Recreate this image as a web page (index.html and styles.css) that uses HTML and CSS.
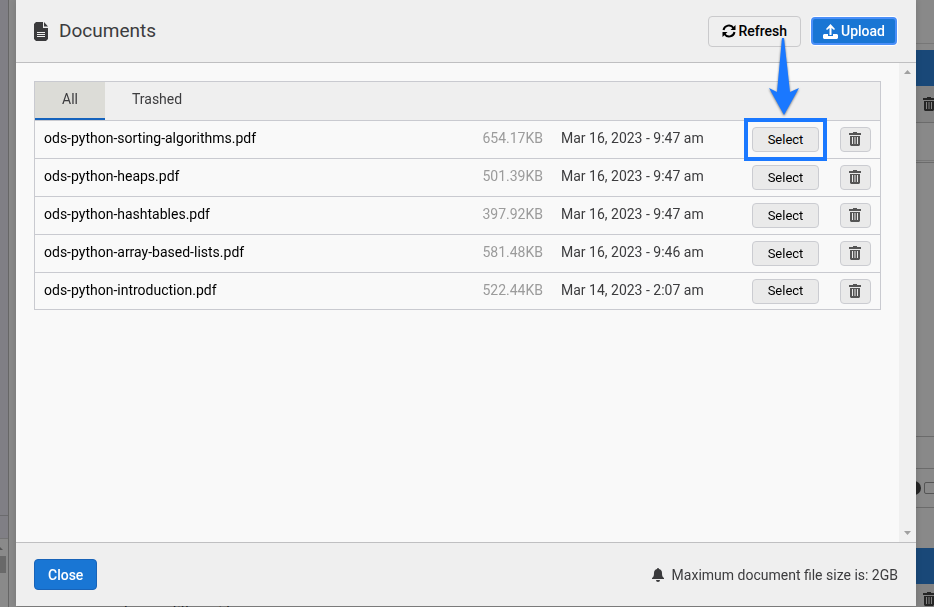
FILE: index.html
```html
<!DOCTYPE html>
<html lang="en">
<head>
<meta charset="utf-8">
<meta name="viewport" content="width=device-width, initial-scale=1">
<title>Documents</title>
<link rel="stylesheet" href="styles.css">
</head>
<body>
<svg class="sprite" aria-hidden="true">
  <symbol id="trash" viewBox="0 0 12 14">
    <path d="M4 0h4v1h4v2H0V1h4z"/>
    <path fill-rule="evenodd" d="M1 4h10v9l-1 1H2l-1-1zM3 5v7h1V5zM5.500 5v7h1V5zM8 5v7h1V5z"/>
  </symbol>
</svg>

<div class="page" aria-hidden="true">
  <div class="rail">
    <div class="rail-list"></div>
    <div class="rail-item"></div>
    <div class="rail-scroll"><svg class="rail-arrow" viewBox="0 0 6 3"><path d="M0 0l3 3H0z"/></svg><div class="rail-thumb"></div></div>
  </div>
  <div class="board">
    <div class="board-top"></div>
    <div class="band"></div>
    <div class="tools"><svg class="page-icon"><use href="#trash"/></svg></div>
    <div class="meta"></div>
    <div class="canvas"></div>
    <div class="spacer"></div>
    <div class="options"><span class="dot"></span><span class="box"></span></div>
    <div class="gap"></div>
    <div class="band"></div>
    <div class="last"><span class="lesson">Lesson title: guide</span><svg class="page-icon"><use href="#trash"/></svg></div>
  </div>
</div>

<main class="modal" role="dialog" aria-labelledby="title">
  <header class="modal-header">
    <svg class="doc-icon" viewBox="0 0 14 19"><path d="M2 0h7v6h5v11l-2 2H2l-2-2V2z"/><path d="M10 0l4 4.500h-4z"/><path class="lines" d="M3 10.500h8M3 12.500h8M3 14.500h8"/></svg>
    <h1 id="title" class="title">Documents</h1>
    <button class="btn refresh" type="button">
      <svg class="refresh-icon" viewBox="0 0 14 14"><path d="M1.500 6A5.500 5.500 0 0 1 11.500 4M12.500 8A5.500 5.500 0 0 1 2.500 10"/><path class="solid" d="M13.500 1v5h-5zM.5 13V8h5z"/></svg>
      Refresh
    </button>
    <button class="btn primary upload" type="button">
      <svg class="upload-icon" viewBox="0 0 15 15"><path d="M7.500 0L12 5l-1 1-2.500-2V11h-2V4L4 6 3 5z"/><path d="M1 10h4v2h5v-2h4l1 1v3l-1 1H1l-1-1v-3z"/></svg>
      Upload
    </button>
  </header>

  <section class="modal-body">
    <div class="content">
      <div class="panel">
        <nav class="tabs">
          <button class="tab active" type="button">All</button>
          <button class="tab" type="button">Trashed</button>
        </nav>
        <table class="files">
          <tbody>
            <tr>
              <td class="name">ods-python-sorting-algorithms.pdf</td><td class="size">654.17KB</td><td class="date">Mar 16, 2023 - 9:47 am</td>
              <td class="pick"><div class="target"><button class="row-btn select" type="button">Select</button>
                <span class="frame"></span>
                <svg class="pointer" viewBox="0 0 30 78"><path d="M13 0h2l6 54 9-4-15 27L0 50l8 4z"/></svg></div></td>
              <td class="remove"><button class="row-btn bin" type="button" aria-label="Delete"><svg class="bin-icon"><use href="#trash"/></svg></button></td>
            </tr>
            <tr>
              <td class="name">ods-python-heaps.pdf</td><td class="size">501.39KB</td><td class="date">Mar 16, 2023 - 9:47 am</td>
              <td class="pick"><button class="row-btn select" type="button">Select</button></td>
              <td class="remove"><button class="row-btn bin" type="button" aria-label="Delete"><svg class="bin-icon"><use href="#trash"/></svg></button></td>
            </tr>
            <tr>
              <td class="name">ods-python-hashtables.pdf</td><td class="size">397.92KB</td><td class="date">Mar 16, 2023 - 9:47 am</td>
              <td class="pick"><button class="row-btn select" type="button">Select</button></td>
              <td class="remove"><button class="row-btn bin" type="button" aria-label="Delete"><svg class="bin-icon"><use href="#trash"/></svg></button></td>
            </tr>
            <tr>
              <td class="name">ods-python-array-based-lists.pdf</td><td class="size">581.48KB</td><td class="date">Mar 16, 2023 - 9:46 am</td>
              <td class="pick"><button class="row-btn select" type="button">Select</button></td>
              <td class="remove"><button class="row-btn bin" type="button" aria-label="Delete"><svg class="bin-icon"><use href="#trash"/></svg></button></td>
            </tr>
            <tr>
              <td class="name">ods-python-introduction.pdf</td><td class="size">522.44KB</td><td class="date">Mar 14, 2023 - 2:07 am</td>
              <td class="pick"><button class="row-btn select" type="button">Select</button></td>
              <td class="remove"><button class="row-btn bin" type="button" aria-label="Delete"><svg class="bin-icon"><use href="#trash"/></svg></button></td>
            </tr>
          </tbody>
        </table>
      </div>
    </div>
    <div class="scrollbar" aria-hidden="true">
      <svg class="scroll-arrow" viewBox="0 0 7 4"><path d="M0 4l3.500-4L7 4z"/></svg>
      <svg class="scroll-arrow" viewBox="0 0 7 4"><path d="M0 0l3.500 4L7 0z"/></svg>
    </div>
  </section>

  <footer class="modal-footer">
    <button class="btn primary close" type="button">Close</button>
    <p class="notice">
      <svg class="bell-icon" viewBox="0 0 12 14"><path d="M5 1a1 1 0 0 1 2 0c2 .5 3 2 3 4 0 3 .5 4 2 5v1H0v-1c1.500-1 2-2 2-5 0-2 1-3.500 3-4zM4 12h4a2 2 0 0 1-4 0z"/></svg>
      Maximum document file size is: 2GB
    </p>
  </footer>
</main>
</body>
</html>
```
FILE: styles.css
```css
* { box-sizing: border-box; }

body {
  margin: 0;
  height: 100vh;
  overflow: hidden;
  font: 14px/20px Roboto, "Liberation Sans", sans-serif;
  color: #3c3c3e;
  background: #898989;
}

button { font: inherit; color: inherit; margin: 0; cursor: pointer; }
.sprite { position: absolute; width: 0; height: 0; }

/* Page under the dialog */
.page { display: grid; grid-template-columns: 9px 1fr; column-gap: 8px; height: 100%; }
.rail { display: flex; flex-direction: column; border-right: 1px solid #666; background: #807f85; }
.rail-list { flex: 1; border-bottom: 1px solid #6b6b6e; }
.rail-item { height: 23px; border-bottom: 1px solid #747474; }
.rail-scroll { height: 68px; padding-top: 8px; background: #8a8a8a; }
.rail-arrow { display: block; width: 6px; height: 3px; fill: #555; }
.rail-thumb { width: 6px; height: 17px; margin-top: 6px; background: #696969; }

.board { display: flex; flex-direction: column; }
.board-top { height: 44px; margin-bottom: 6px; border-bottom: 1px solid #777; }
.band { height: 36px; background: #194878; }
.tools { display: flex; justify-content: flex-end; align-items: center; height: 37px; background: #838383; border-bottom: 1px solid #6b6b6b; }
.page-icon { width: 12px; height: 14px; fill: #252525; margin-right: -1px; }
.meta { height: 38px; border-bottom: 1px solid #777; }
.canvas { flex: 1; margin-top: 1px; border-top: 1px solid #6b6b6b; border-bottom: 1px solid #6b6b6b; }
.spacer { height: 32px; border-bottom: 1px solid #6b6b6b; }
.options { display: flex; justify-content: flex-end; align-items: center; gap: 3px; height: 39px; border-bottom: 1px solid #6b6b6b; }
.dot { width: 14px; height: 14px; border-radius: 50%; background: #262626; }
.box { width: 12px; height: 12px; margin-right: -2px; border: 1px solid #555; border-radius: 2px; }
.gap { height: 40px; }
.last { display: flex; height: 23px; padding-top: 8px; background: #838383; }
.lesson { margin: 9px auto 0 107px; color: #1c1c1c; }

/* Dialog */
.modal {
  position: fixed;
  inset: 0 18px 1px 16px;
  display: flex;
  flex-direction: column;
  background: #f9f9f9;
  border-radius: 2px;
  box-shadow: 0 0 6px #00000026;
}
.modal-header {
  display: flex;
  align-items: center;
  height: 63px;
  padding: 0 18px;
  background: #efefef;
  border-bottom: 1px solid #bfbfc1;
}
.doc-icon { width: 14px; height: 19px; margin-right: 11px; fill: #3a3a3c; }
.lines { stroke: #efefef; stroke-width: 1; }
.title { flex: 1; margin: 0; font-size: 19px; line-height: 24px; font-weight: 400; }

.btn {
  display: flex;
  align-items: center;
  justify-content: center;
  height: 31px;
  padding: 0 13px;
  border: 1px solid #cacacc;
  border-radius: 4px;
  background: #efefef;
  color: #000;
  font-weight: 500;
}
.refresh { gap: 2px; margin-right: 10px; }
.refresh-icon { width: 14px; height: 14px; fill: none; stroke: #000; stroke-width: 2; }
.solid { fill: #000; stroke: none; }
.primary { border-color: #1863b8; background: #1976d4; color: #fff; }
.upload { height: 28px; gap: 3px; margin-right: 1px; padding: 0 10px; border: 2px solid #4a8ff8; box-shadow: 0 0 0 1px #fff; }
.upload-icon { width: 15px; height: 15px; fill: #fff; }

.modal-body { flex: 1; display: flex; position: relative; }
.content { flex: 1; padding: 18px; }
.panel { border: 1px solid #c9cad0; }
.tabs { display: flex; height: 38px; background: #efefef; }
.tab { padding: 0 27px 2px; border: 0; border-bottom: 2px solid transparent; background: none; }
.tab.active { border-color: #1563bd; background: #dcdcd7; }

.files { width: 100%; border-spacing: 0; }
.files td { height: 38px; padding: 0; border-top: 1px solid #c9cad0; white-space: nowrap; }
.files tr:last-child td { height: 37px; }
.files .name { padding: 0 9px 3px; color: #000; }
.files .size { padding: 0 18px 3px 0; text-align: right; color: #9b9b9b; }
.files .date { width: 191px; padding-bottom: 3px; }
.pick { width: 88px; }
.remove { width: 40px; }
.target { position: relative; width: 67px; }
.row-btn {
  display: flex;
  align-items: center;
  justify-content: center;
  height: 25px;
  padding: 0;
  border: 1px solid #cbccd1;
  border-radius: 4px;
  background: #eaeaea;
  color: #000;
  font-size: 13px;
}
.select { width: 67px; }
.bin { width: 31px; padding: 0 1px 1px 0; }
.bin-icon { width: 12px; height: 14px; fill: #555; }

/* Callout over the first row's button */
.frame { position: absolute; inset: -9px -8px; border: 4px solid #1a78ff; pointer-events: none; }
.pointer {
  position: absolute;
  top: -89px;
  left: 17px;
  width: 30px;
  height: 78px;
  fill: #1a78ff;
  filter: drop-shadow(0 1px 1px #00000080);
  pointer-events: none;
}

.scrollbar {
  display: flex;
  flex-direction: column;
  align-items: center;
  justify-content: space-between;
  width: 17px;
  padding: 7px 0;
  background: #f0f0f0;
}
.scroll-arrow { width: 7px; height: 4px; fill: #a0a0a0; }

.modal-footer {
  display: flex;
  align-items: center;
  justify-content: space-between;
  height: 64px;
  padding: 0 18px;
  background: #efefef;
  border-top: 1px solid #bfbfc1;
}
.notice { display: flex; align-items: center; gap: 8px; margin: 0; }
.bell-icon { width: 12px; height: 14px; fill: #3a3a3c; }
```
